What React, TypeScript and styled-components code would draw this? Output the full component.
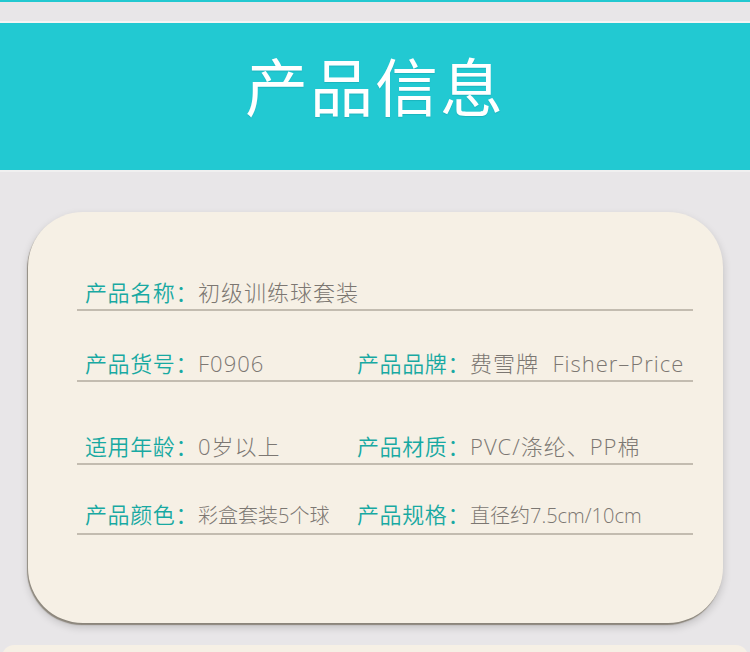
import styled, { createGlobalStyle } from "styled-components";

const GlobalStyle = createGlobalStyle`
    html, body {
        margin: 0;
        padding: 0;
        background: #e8e6e8;
        overflow: hidden;
    }
    body {
        font-family: "Noto Sans CJK SC", "Noto Sans", sans-serif;
    }
`;

type Item = { label: string; value: string };

const rows: { h: number; small?: boolean; items: Item[] }[] = [
    { h: 39, items: [{ label: "产品名称", value: "初级训练球套装" }] },
    {
        h: 71,
        items: [
            { label: "产品货号", value: "F0906" },
            { label: "产品品牌", value: "费雪牌  Fisher–Price" },
        ],
    },
    {
        h: 83,
        items: [
            { label: "适用年龄", value: "0岁以上" },
            { label: "产品材质", value: "PVC/涤纶、PP棉" },
        ],
    },
    {
        h: 70,
        small: true,
        items: [
            { label: "产品颜色", value: "彩盒套装5个球" },
            { label: "产品规格", value: "直径约7.5cm/10cm" },
        ],
    },
];

export default function App() {
    return (
        <PageStyled>
            <GlobalStyle />
            <TopStripStyled />
            <BannerStyled>
                <TitleStyled>产品信息</TitleStyled>
            </BannerStyled>
            <CardStyled>
                {rows.map((row, i) => (
                    <RowStyled key={i} $h={row.h}>
                        {row.items.map((item) => (
                            <CellStyled key={item.label}>
                                <LabelStyled>{item.label}：</LabelStyled>
                                <ValueStyled $small={row.small}>{item.value}</ValueStyled>
                            </CellStyled>
                        ))}
                    </RowStyled>
                ))}
            </CardStyled>
            <NextCardStyled />
        </PageStyled>
    );
}

const PageStyled = styled.div`
    width: 750px;
    height: 652px;
    overflow: hidden;
    background: #e8e6e8;
`;

const TopStripStyled = styled.div`
    height: 2px;
    background: #22c8d0;
    margin-bottom: 19px;
`;

const BannerStyled = styled.header`
    box-sizing: border-box;
    height: 151px;
    background: #22c9d2;
    border-top: 2px solid #f4f4f4;
    border-bottom: 2px solid #f0f0f0;
    display: flex;
    justify-content: center;
    padding-top: 25px;
`;

const TitleStyled = styled.h1`
    margin: 0;
    color: #ffffff;
    font-size: 63px;
    font-weight: 400;
    letter-spacing: 2px;
    line-height: 72px;
    text-shadow: 0 1px 1px rgba(0, 120, 130, 0.25);
`;

const CardStyled = styled.section`
    margin: 40px 27px 0 28px;
    height: 411px;
    box-sizing: border-box;
    background: #f6f0e5;
    border-radius: 55px;
    padding: 60px 30px 0 49px;
    box-shadow:
        -1px 2px 1px rgba(90, 80, 60, 0.55),
        0 4px 8px rgba(0, 0, 0, 0.18);
`;

const RowStyled = styled.div<{ $h: number }>`
    height: ${(p) => p.$h}px;
    box-sizing: border-box;
    display: flex;
    align-items: flex-end;
    padding: 0 0 4px 8px;
    border-bottom: 2px solid #c3bcb0;
`;

const CellStyled = styled.div`
    width: 272px;
    display: flex;
    align-items: baseline;
    white-space: pre;
`;

const LabelStyled = styled.span`
    color: #18a9a2;
    font-size: 22px;
    line-height: 26px;
    font-weight: 350;
    letter-spacing: 0.6px;
`;

const ValueStyled = styled.span<{ $small?: boolean }>`
    font-family: "Open Sans", "Noto Sans CJK SC", sans-serif;
    color: #7c7772;
    font-size: ${(p) => (p.$small ? 20 : 22)}px;
    letter-spacing: ${(p) => (p.$small ? 0 : 1)}px;
    line-height: 26px;
    font-weight: 300;
`;

const NextCardStyled = styled.div`
    margin: 22px 2px 0;
    height: 40px;
    background: #f6f0e5;
    border-radius: 12px;
`;
